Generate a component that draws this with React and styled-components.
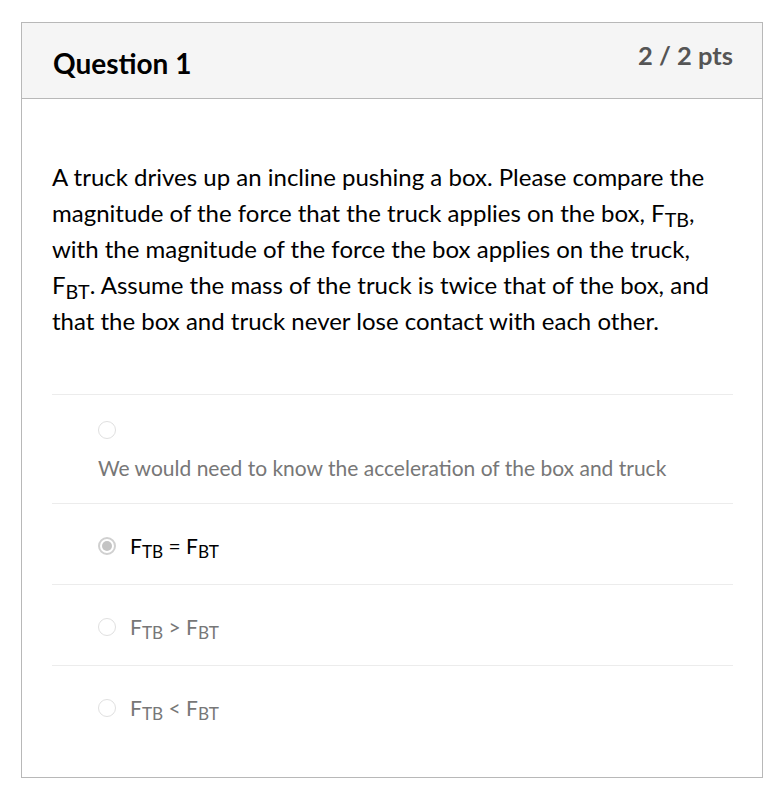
import React from "react";
import styled, { createGlobalStyle } from "styled-components";

const Global = createGlobalStyle`
  html, body { margin: 0; padding: 0; background: #fff; }
  body { font-family: Lato, "Open Sans", sans-serif; color: #2d3b45; }
`;

const Page = styled.div`
  padding: 22px 20px 15px 21px;
`;

const Card = styled.div`
  width: 740px;
  border: 1px solid #b8b8b8;
  background: #fff;
`;

const Header = styled.div`
  height: 76px;
  box-sizing: border-box;
  background: #f5f5f5;
  border-bottom: 1px solid #b8b8b8;
  display: flex;
  justify-content: space-between;
  align-items: flex-start;
  padding: 0 29px 0 31px;
`;

const Title = styled.h2`
  margin: 23px 0 0;
  font-size: 28px;
  font-weight: 700;
  color: #000;
  line-height: 34px;
`;

const Points = styled.div`
  margin-top: 17px;
  font-size: 25.5px;
  font-weight: 700;
  color: #555;
  line-height: 30px;
`;

const Body = styled.div`
  padding: 60px 29px 30px 30px;
`;

const QuestionText = styled.p`
  margin: 0 0 55px;
  font-size: 24px;
  line-height: 36px;
  color: #000;
`;

const Sub = styled.sub`
  font-size: 0.82em;
  vertical-align: -0.25em;
  line-height: 0;
`;

const Answers = styled.div`
  border-top: 1px solid #ececec;
`;

const Answer = styled.div`
  display: flex;
  flex-direction: ${(p) => (p.$stacked ? "column" : "row")};
  align-items: ${(p) => (p.$stacked ? "flex-start" : "center")};
  gap: ${(p) => (p.$stacked ? "16px" : "14px")};
  height: ${(p) => (p.$stacked ? "109px" : "81px")};
  box-sizing: border-box;
  padding: ${(p) => (p.$stacked ? "26px 0 0 46px" : "3px 0 0 46px")};
  border-bottom: ${(p) => (p.$last ? "none" : "1px solid #ececec")};
  font-size: 21px;
  color: ${(p) => (p.$selected ? "#000" : "#777")};
`;

const Radio = styled.span`
  width: 18px;
  height: 18px;
  box-sizing: border-box;
  border-radius: 50%;
  border: 1px solid #e0e0e0;
  background: #fff;
  flex: none;
  position: relative;
  ${(p) =>
    p.$checked &&
    `
    border: 2px solid #d0d0d0;
    &::after {
      content: "";
      position: absolute;
      left: 2px; top: 2px; right: 2px; bottom: 2px;
      border-radius: 50%;
      background: #c4c4c4;
    }
  `}
`;

const Label = styled.span`
  line-height: 26px;
`;

const F = ({ s }) => (
  <>
    F<Sub>{s}</Sub>
  </>
);

export default function App() {
  return (
    <>
      <Global />
      <Page>
        <Card>
          <Header>
            <Title>Question 1</Title>
            <Points>2 / 2 pts</Points>
          </Header>
          <Body>
            <QuestionText>
              A truck drives up an incline pushing a box. Please compare the
              magnitude of the force that the truck applies on the box, <F s="TB" />,
              with the magnitude of the force the box applies on the truck,{" "}
              <F s="BT" />. Assume the mass of the truck is twice that of the box, and
              that the box and truck never lose contact with each other.
            </QuestionText>
            <Answers>
              <Answer $stacked>
                <Radio />
                <Label>We would need to know the acceleration of the box and truck</Label>
              </Answer>
              <Answer $selected>
                <Radio $checked />
                <Label>
                  <F s="TB" /> = <F s="BT" />
                </Label>
              </Answer>
              <Answer>
                <Radio />
                <Label>
                  <F s="TB" /> &gt; <F s="BT" />
                </Label>
              </Answer>
              <Answer $last>
                <Radio />
                <Label>
                  <F s="TB" /> &lt; <F s="BT" />
                </Label>
              </Answer>
            </Answers>
          </Body>
        </Card>
      </Page>
    </>
  );
}
